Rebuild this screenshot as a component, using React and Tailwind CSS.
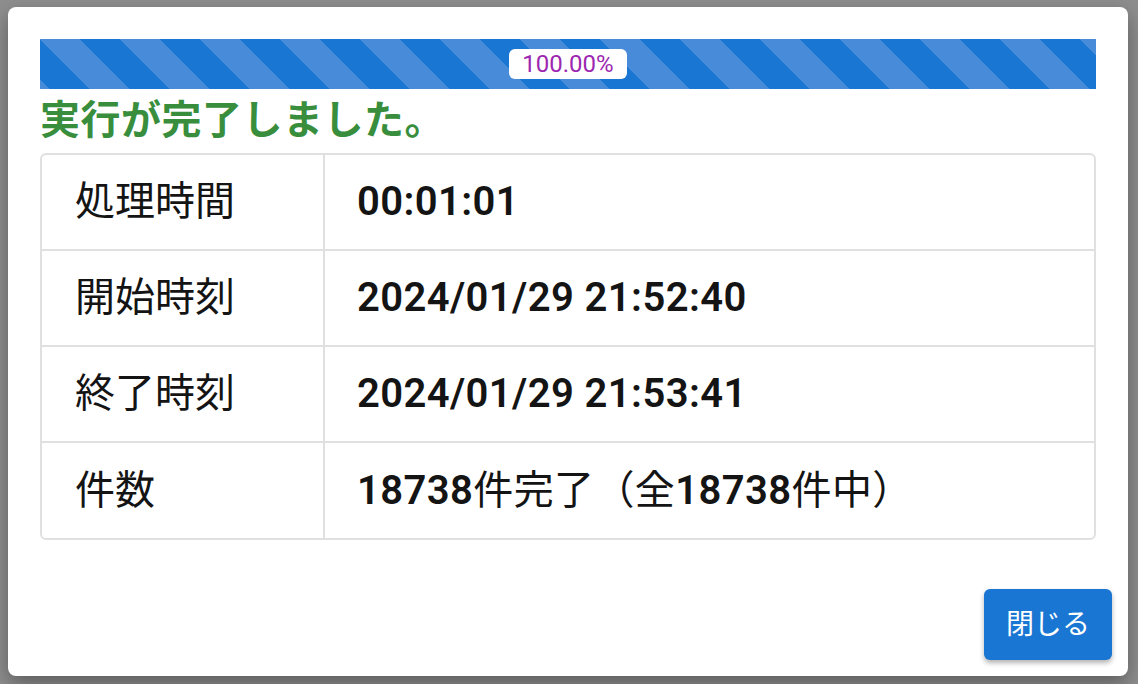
import React from 'react'

const rows = [
  { label: '処理時間', value: [['00:01:01', true]] },
  { label: '開始時刻', value: [['2024/01/29 21:52:40', true]] },
  { label: '終了時刻', value: [['2024/01/29 21:53:41', true]] },
  {
    label: '件数',
    value: [
      ['18738', true],
      ['件完了（全', false],
      ['18738', true],
      ['件中）', false],
    ],
  },
]

const App = () => {
  return (
    <div className="w-full h-[684px] bg-[#8e8e8e] pt-[7px] pl-[8px] font-['Roboto','Noto_Sans_CJK_JP',sans-serif]">
      <div className="w-[1120px] h-[669px] bg-white rounded-lg shadow-[0_8px_20px_rgba(0,0,0,0.35)] flex flex-col">
        <div className="px-8 pt-8">
          {/* progress */}
          <div className="h-[50px] flex items-center justify-center bg-[#1976d2] bg-[linear-gradient(45deg,#488bd9_25%,transparent_25%,transparent_50%,#488bd9_50%,#488bd9_75%,transparent_75%,transparent)] bg-[length:80px_80px]">
            <div className="h-[30px] px-[13px] rounded-md bg-white text-[#9c27b0] text-[24px] leading-[30px]">
              100.00%
            </div>
          </div>

          <div className="h-[64px] flex items-center text-[#388e3c] text-[40px] tracking-[0.5px] font-bold leading-none">
            実行が完了しました。
          </div>

          <div className="border-2 border-[#e0e0e0] rounded-md">
            {rows.map((row, i) => (
              <div
                key={row.label}
                className={`flex ${i < rows.length - 1 ? 'h-[96px] border-b-2 border-[#e0e0e0]' : 'h-[95px]'}`}
              >
                <div className="w-[283px] border-r-2 border-[#e0e0e0] pl-[33px] flex items-center text-[40px] text-[#141414]">
                  {row.label}
                </div>
                <div className="flex-1 pl-[32px] flex items-center text-[40px] tracking-[0.4px] text-[#141414]">
                  {row.value.map(([text, bold], j) => (
                    <span key={j} className={bold ? 'font-semibold' : 'font-normal'}>
                      {text}
                    </span>
                  ))}
                </div>
              </div>
            ))}
          </div>
        </div>

        <div className="mt-auto flex justify-end p-4">
          <button className="w-[128px] h-[71px] rounded-md bg-[#1976d2] text-white text-[28px] shadow-[0_3px_5px_rgba(0,0,0,0.3)]">
            閉じる
          </button>
        </div>
      </div>
    </div>
  )
}

export default App
